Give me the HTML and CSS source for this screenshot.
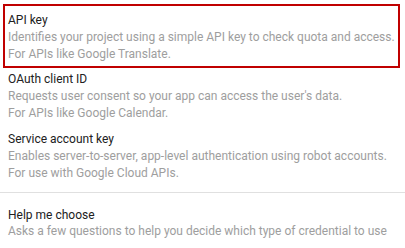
FILE: index.html
```html
<!DOCTYPE html>
<html lang="en">
<head>
  <meta charset="UTF-8">
  <title>Create credentials</title>
  <link rel="stylesheet" href="styles.css">
</head>
<body>
  <div class="menu">
    <div class="options">
      <div class="option selected">
        <div class="option-title">API key</div>
        <div class="option-desc">Identifies your project using a simple API key to check quota and access.<br>For APIs like Google Translate.</div>
      </div>
      <div class="option">
        <div class="option-title">OAuth client ID</div>
        <div class="option-desc">Requests user consent so your app can access the user's data.<br>For APIs like Google Calendar.</div>
      </div>
      <div class="option">
        <div class="option-title">Service account key</div>
        <div class="option-desc">Enables server-to-server, app-level authentication using robot accounts.<br>For use with Google Cloud APIs.</div>
      </div>
    </div>
    <div class="options help">
      <div class="option">
        <div class="option-title">Help me choose</div>
        <div class="option-desc">Asks a few questions to help you decide which type of credential to use</div>
      </div>
    </div>
  </div>
</body>
</html>
```

FILE: styles.css
```css
* {
  margin: 0;
  padding: 0;
  box-sizing: border-box;
}

body {
  font-family: Roboto, "Liberation Sans", sans-serif;
  font-size: 12px;
  line-height: 17px;
  background: #fff;
  color: #212121;
  overflow: hidden;
}

.menu {
  width: 405px;
}

.options {
  padding: 4px 5px 4px 3px;
}

.option {
  padding: 1px 3px 4px 3px;
  border: 2px solid transparent;
  white-space: nowrap;
}

.option.selected {
  border-color: #c00000;
  padding-top: 6px;
  padding-bottom: 3px;
}

.option-title {
  color: #212121;
}

.option-desc {
  color: #9e9e9e;
}

.help {
  border-top: 1px solid #e0e0e0;
  padding-top: 11px;
}

.help .option {
  line-height: 16px;
}
```
